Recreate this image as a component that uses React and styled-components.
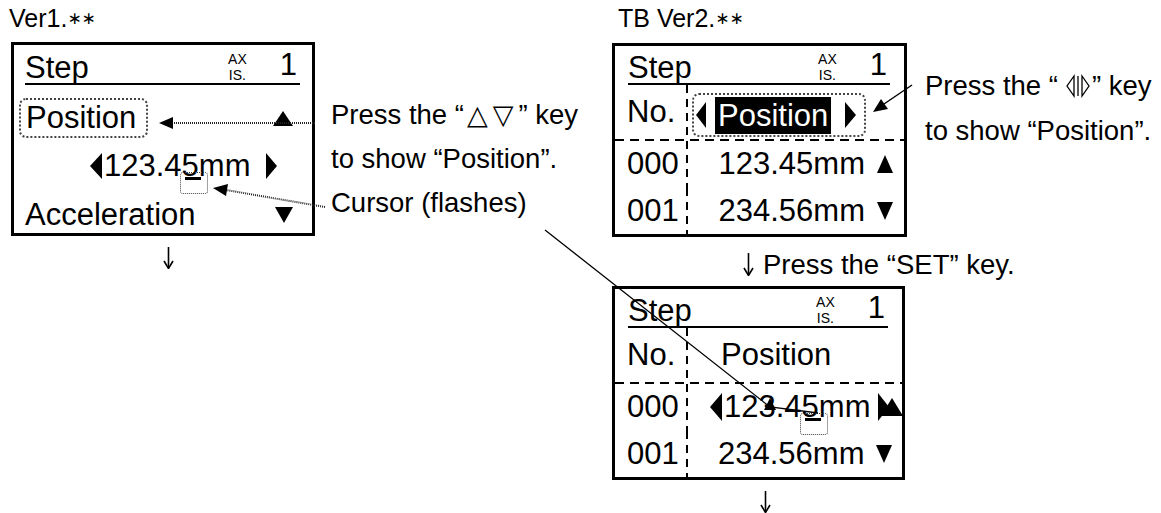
import React from "react";
import styled, { createGlobalStyle } from "styled-components";

const GlobalStyle = createGlobalStyle`
  html, body {
    margin: 0;
    padding: 0;
    background: #fff;
  }
  body {
    font-family: "Liberation Sans", Arial, "DejaVu Sans", sans-serif;
    color: #000;
  }
`;

const Page = styled.div`
  position: relative;
  width: 1161px;
  height: 513px;
  display: flex;
  align-items: flex-start;
  overflow: hidden;
`;

const Column = styled.div`
  display: flex;
  flex-direction: column;
  flex-shrink: 0;
  width: ${(p) => p.$w}px;
  margin-left: ${(p) => p.$ml || 0}px;
`;

const Caption = styled.div`
  height: ${(p) => p.$h}px;
  font-size: 25px;
  line-height: 36px;
  padding-left: ${(p) => p.$pl || 0}px;
  margin-left: ${(p) => p.$ml || 0}px;
  white-space: nowrap;
`;

const Stars = styled.span`
  font-family: "DejaVu Sans", sans-serif;
  font-size: 17px;
  vertical-align: 3px;
`;

const Screen = styled.div`
  box-sizing: border-box;
  width: ${(p) => p.$w}px;
  height: 194px;
  border: 3px solid #000;
  display: flex;
  flex-direction: column;
  font-size: 31px;
  line-height: 30px;
`;

const ScreenHead = styled.div`
  box-sizing: border-box;
  flex-shrink: 0;
  display: flex;
  align-items: flex-end;
  height: ${(p) => p.$h}px;
  margin: 0 ${(p) => p.$mr}px 0 ${(p) => p.$ml}px;
  border-bottom: 2px solid #000;
`;

const AxisTag = styled.div`
  margin-left: auto;
  margin-right: 33px;
  display: flex;
  flex-direction: column;
  align-items: center;
  font-size: 14px;
  line-height: 16px;
`;

const AxisNo = styled.span`
  margin-right: 3px;
  padding-bottom: 3px;
`;

const Line = styled.div`
  box-sizing: border-box;
  display: flex;
  align-items: ${(p) => p.$align || "center"};
  justify-content: ${(p) => p.$justify || "flex-start"};
  height: ${(p) => p.$h}px;
  padding: ${(p) => p.$pt || 0}px ${(p) => p.$pr || 0}px
    ${(p) => p.$pb || 0}px ${(p) => p.$pl || 0}px;
  white-space: nowrap;
`;

const Frame = styled.span`
  box-sizing: border-box;
  display: inline-flex;
  align-items: center;
  height: ${(p) => p.$h}px;
  padding: 0 ${(p) => p.$pr}px 0 ${(p) => p.$pl}px;
  gap: ${(p) => p.$gap || 0}px;
  border: 2px dotted #444;
  border-radius: 7px;
`;

const Inverse = styled.span`
  background: #000;
  color: #fff;
  padding: 0 3px;
  line-height: 37px;
`;

const Tri = styled.span`
  display: inline-block;
  flex-shrink: 0;
  width: 0;
  height: 0;
  margin: 0 ${(p) => p.$mr || 0}px ${(p) => p.$mb || 0}px ${(p) => p.$ml || 0}px;
  ${({ $dir, $w, $h }) => {
    if ($dir === "up")
      return `border-left:${$w / 2}px solid transparent;border-right:${$w / 2}px solid transparent;border-bottom:${$h}px solid #000;`;
    if ($dir === "down")
      return `border-left:${$w / 2}px solid transparent;border-right:${$w / 2}px solid transparent;border-top:${$h}px solid #000;`;
    if ($dir === "left")
      return `border-top:${$h / 2}px solid transparent;border-bottom:${$h / 2}px solid transparent;border-right:${$w}px solid #000;`;
    return `border-top:${$h / 2}px solid transparent;border-bottom:${$h / 2}px solid transparent;border-left:${$w}px solid #000;`;
  }}
`;

const Digit = styled.span`
  position: relative;
`;

const Cursor = styled.span`
  position: absolute;
  left: -2px;
  top: 24px;
  width: 28px;
  height: 22px;
  box-sizing: border-box;
  border: 1.5px dotted #444;
  border-radius: 3px;
  &::after {
    content: "";
    position: absolute;
    left: 4px;
    top: 4px;
    width: 16px;
    height: 3px;
    background: #000;
  }
`;

const Table = styled.div`
  flex: 1;
  display: grid;
  grid-template-columns: 73px 1fr;
  grid-template-rows: 54px 2px 1fr 1fr;
`;

const NoCell = styled.div`
  display: flex;
  align-items: center;
  padding-left: 12px;
  background: repeating-linear-gradient(180deg, #000 0 8px, transparent 8px 14px)
    right top / 2px 100% no-repeat;
`;

const ValueCell = styled.div`
  box-sizing: border-box;
  display: flex;
  align-items: center;
  justify-content: ${(p) => p.$justify || "flex-end"};
  padding: ${(p) => p.$pt || 0}px ${(p) => p.$pr || 0}px 0 ${(p) => p.$pl || 0}px;
  gap: ${(p) => p.$gap || 0}px;
  white-space: nowrap;
`;

const HDash = styled.div`
  grid-column: 1 / -1;
  background: repeating-linear-gradient(90deg, #000 0 9px, transparent 9px 15px);
`;

const Notes = styled.div`
  flex-shrink: 0;
  width: ${(p) => p.$w}px;
  margin-left: ${(p) => p.$ml}px;
  padding-top: ${(p) => p.$pt}px;
  font-size: 27.5px;
  line-height: ${(p) => p.$lh}px;
  white-space: nowrap;
`;

const Shapes = styled.span`
  font-family: "DejaVu Sans", sans-serif;
  font-size: 27px;
  letter-spacing: 5px;
  margin-left: 3px;
`;

const KeyGlyph = styled.svg`
  width: 26px;
  height: 24px;
  margin: 0 1px 0 7px;
  vertical-align: -3px;
`;

const SetNote = styled.div`
  display: flex;
  align-items: center;
  gap: 9px;
  height: 49px;
  padding: 6px 0 0 131px;
  box-sizing: border-box;
  font-size: 27.5px;
  line-height: 40px;
  white-space: nowrap;
`;

const FlowArrow = styled.svg`
  display: block;
  flex-shrink: 0;
  margin-left: ${(p) => p.$ml || 0}px;
  margin-top: ${(p) => p.$mt || 0}px;
`;

const Overlay = styled.svg`
  position: absolute;
  left: 0;
  top: 0;
  pointer-events: none;
`;

function DownArrow({ ml, mt, h = 22 }) {
  return (
    <FlowArrow $ml={ml} $mt={mt} width="11" height={h} viewBox={`0 0 11 ${h}`}>
      <path d={`M5.5 0 V${h - 1}`} stroke="#000" strokeWidth="1.6" />
      <path d={`M1 ${h - 8} L5.5 ${h - 0.5} L10 ${h - 8}`} fill="none" stroke="#000" strokeWidth="1.6" />
    </FlowArrow>
  );
}

function Header({ ml, mr, h }) {
  return (
    <ScreenHead $ml={ml} $mr={mr} $h={h}>
      <span>Step</span>
      <AxisTag>
        <span>AX</span>
        <span>IS.</span>
      </AxisTag>
      <AxisNo>1</AxisNo>
    </ScreenHead>
  );
}

function Value({ text, cursorAt }) {
  if (cursorAt == null) return <span>{text}</span>;
  return (
    <span>
      {text.slice(0, cursorAt)}
      <Digit>
        {text[cursorAt]}
        <Cursor />
      </Digit>
      {text.slice(cursorAt + 1)}
    </span>
  );
}

export default function App() {
  return (
    <Page>
      <GlobalStyle />

      <Column $w={304} $ml={11}>
        <Caption $h={42} $ml={-2}>
          Ver1.<Stars>∗∗</Stars>
        </Caption>
        <Screen $w={304}>
          <Header ml={11} mr={12} h={40} />
          <Line $h={60} $pt={13} $pb={7} $pl={5} $pr={19} $justify="space-between">
            <Frame $h={40} $pl={5} $pr={10}>
              Position
            </Frame>
            <Tri $dir="up" $w={20} $h={15} />
          </Line>
          <Line $h={42} $pl={76}>
            <Tri $dir="left" $w={12} $h={26} $mr={2} />
            <Value text="123.45mm" cursorAt={5} />
            <Tri $dir="right" $w={11} $h={26} $ml={16} />
          </Line>
          <Line $h={46} $align="flex-end" $pb={3} $pl={11} $pr={19} $justify="space-between">
            <span>Acceleration</span>
            <Tri $dir="down" $w={18} $h={16} $mb={7} />
          </Line>
        </Screen>
        <DownArrow ml={152} mt={11} h={22} />
      </Column>

      <Notes $w={281} $ml={16} $pt={93} $lh={44}>
        Press the “<Shapes>△▽</Shapes>” key
        <br />
        to show “Position”.
        <br />
        Cursor (flashes)
      </Notes>

      <Column $w={295}>
        <Caption $h={43} $pl={6}>
          TB Ver2.<Stars>∗∗</Stars>
        </Caption>
        <Screen $w={295}>
          <Header ml={13} mr={14} h={39} />
          <Table>
            <NoCell>No.</NoCell>
            <ValueCell $justify="flex-start" $pl={4} $pt={6}>
              <Frame $h={44} $pl={2} $pr={8} $gap={9}>
                <Tri $dir="left" $w={10} $h={26} />
                <Inverse>Position</Inverse>
                <Tri $dir="right" $w={11} $h={26} $ml={5} />
              </Frame>
            </ValueCell>
            <HDash />
            <NoCell>000</NoCell>
            <ValueCell $pr={11} $gap={12}>
              <span>123.45mm</span>
              <Tri $dir="up" $w={17} $h={18} />
            </ValueCell>
            <NoCell>001</NoCell>
            <ValueCell $pr={11} $gap={12}>
              <span>234.56mm</span>
              <Tri $dir="down" $w={17} $h={18} />
            </ValueCell>
          </Table>
        </Screen>
        <SetNote>
          <DownArrow h={23} />
          <span>Press the “SET” key.</span>
        </SetNote>
        <Screen $w={293}>
          <Header ml={13} mr={14} h={39} />
          <Table>
            <NoCell>No.</NoCell>
            <ValueCell $justify="flex-start" $pl={33}>
              Position
            </ValueCell>
            <HDash />
            <NoCell>000</NoCell>
            <ValueCell $justify="flex-start" $pl={22}>
              <Tri $dir="left" $w={12} $h={28} $mr={2} />
              <Value text="123.45mm" cursorAt={5} />
              <Tri $dir="right" $w={11} $h={28} $ml={8} />
              <Tri $dir="up" $w={22} $h={18} $ml={-8} />
            </ValueCell>
            <NoCell>001</NoCell>
            <ValueCell $pr={11} $gap={12}>
              <span>234.56mm</span>
              <Tri $dir="down" $w={17} $h={18} />
            </ValueCell>
          </Table>
        </Screen>
        <DownArrow ml={148} mt={11} h={22} />
      </Column>

      <Notes $w={240} $ml={18} $pt={63} $lh={45}>
        Press the “
        <KeyGlyph viewBox="0 0 26 24">
          <path d="M9 2 L2 12 L9 22 Z" fill="none" stroke="#000" strokeWidth="1.3" />
          <path d="M13 2 V22" stroke="#000" strokeWidth="1.3" />
          <path d="M17 2 L24 12 L17 22 Z" fill="none" stroke="#000" strokeWidth="1.3" />
        </KeyGlyph>
        ” key
        <br />
        to show “Position”.
      </Notes>

      <Overlay width="1161" height="513" viewBox="0 0 1161 513">
        <line x1="315" y1="123" x2="172" y2="123" stroke="#222" strokeWidth="2" strokeDasharray="1 1" />
        <polygon points="159,123 173,117 173,129" fill="#000" />
        <line x1="325" y1="207" x2="226" y2="190" stroke="#222" strokeWidth="2" strokeDasharray="1 1" />
        <polygon points="213,188 228,184 226,196" fill="#000" />
        <polyline points="545,230 770,407 818,413" fill="none" stroke="#000" strokeWidth="1.3" />
        <polygon points="770,398 776,410 764,410" fill="#000" />
        <line x1="912" y1="85" x2="884" y2="104" stroke="#000" strokeWidth="1.5" />
        <polygon points="873,112 888,109 881,99" fill="#000" />
      </Overlay>
    </Page>
  );
}
